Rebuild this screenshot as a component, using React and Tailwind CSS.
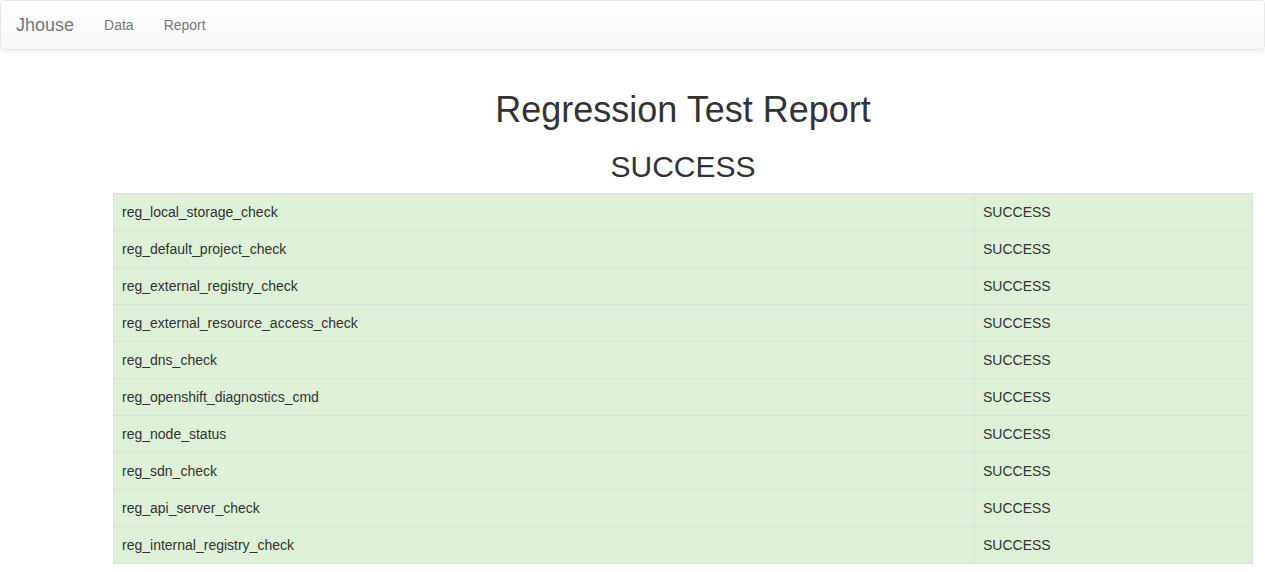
const rows = [
  "reg_local_storage_check",
  "reg_default_project_check",
  "reg_external_registry_check",
  "reg_external_resource_access_check",
  "reg_dns_check",
  "reg_openshift_diagnostics_cmd",
  "reg_node_status",
  "reg_sdn_check",
  "reg_api_server_check",
  "reg_internal_registry_check",
];

export default function App() {
  return (
    <div className="min-h-screen bg-white text-[14px] text-[#333] font-['Liberation_Sans',Arial,sans-serif]">
      <nav className="flex h-[50px] items-center rounded border border-[#e7e7e7] bg-gradient-to-b from-white to-[#f8f8f8] shadow-[0_1px_5px_rgba(0,0,0,0.075)]">
        <a className="px-[15px] text-[18px] leading-[20px] text-[#777]">Jhouse</a>
        <ul className="flex">
          <li className="px-[15px] leading-[20px] text-[#777]">Data</li>
          <li className="px-[15px] leading-[20px] text-[#777]">Report</li>
        </ul>
      </nav>

      <div className="pl-[113px] pr-[12px] pt-[20px]">
        <h1 className="mt-[20px] mb-[10px] text-center text-[36px] leading-[1.1] font-normal">Regression Test Report</h1>
        <h2 className="mt-[20px] mb-[10px] text-center text-[30px] leading-[1.1] font-normal">SUCCESS</h2>
        <table className="w-full border-collapse border border-[#ddd]">
          <tbody>
            {rows.map((name) => (
              <tr key={name} className="bg-[#dff0d8]">
                <td className="border border-[#ddd] p-[8px] leading-[20px]">{name}</td>
                <td className="w-[278px] border border-[#ddd] p-[8px] leading-[20px]">SUCCESS</td>
              </tr>
            ))}
          </tbody>
        </table>
      </div>
    </div>
  );
}
